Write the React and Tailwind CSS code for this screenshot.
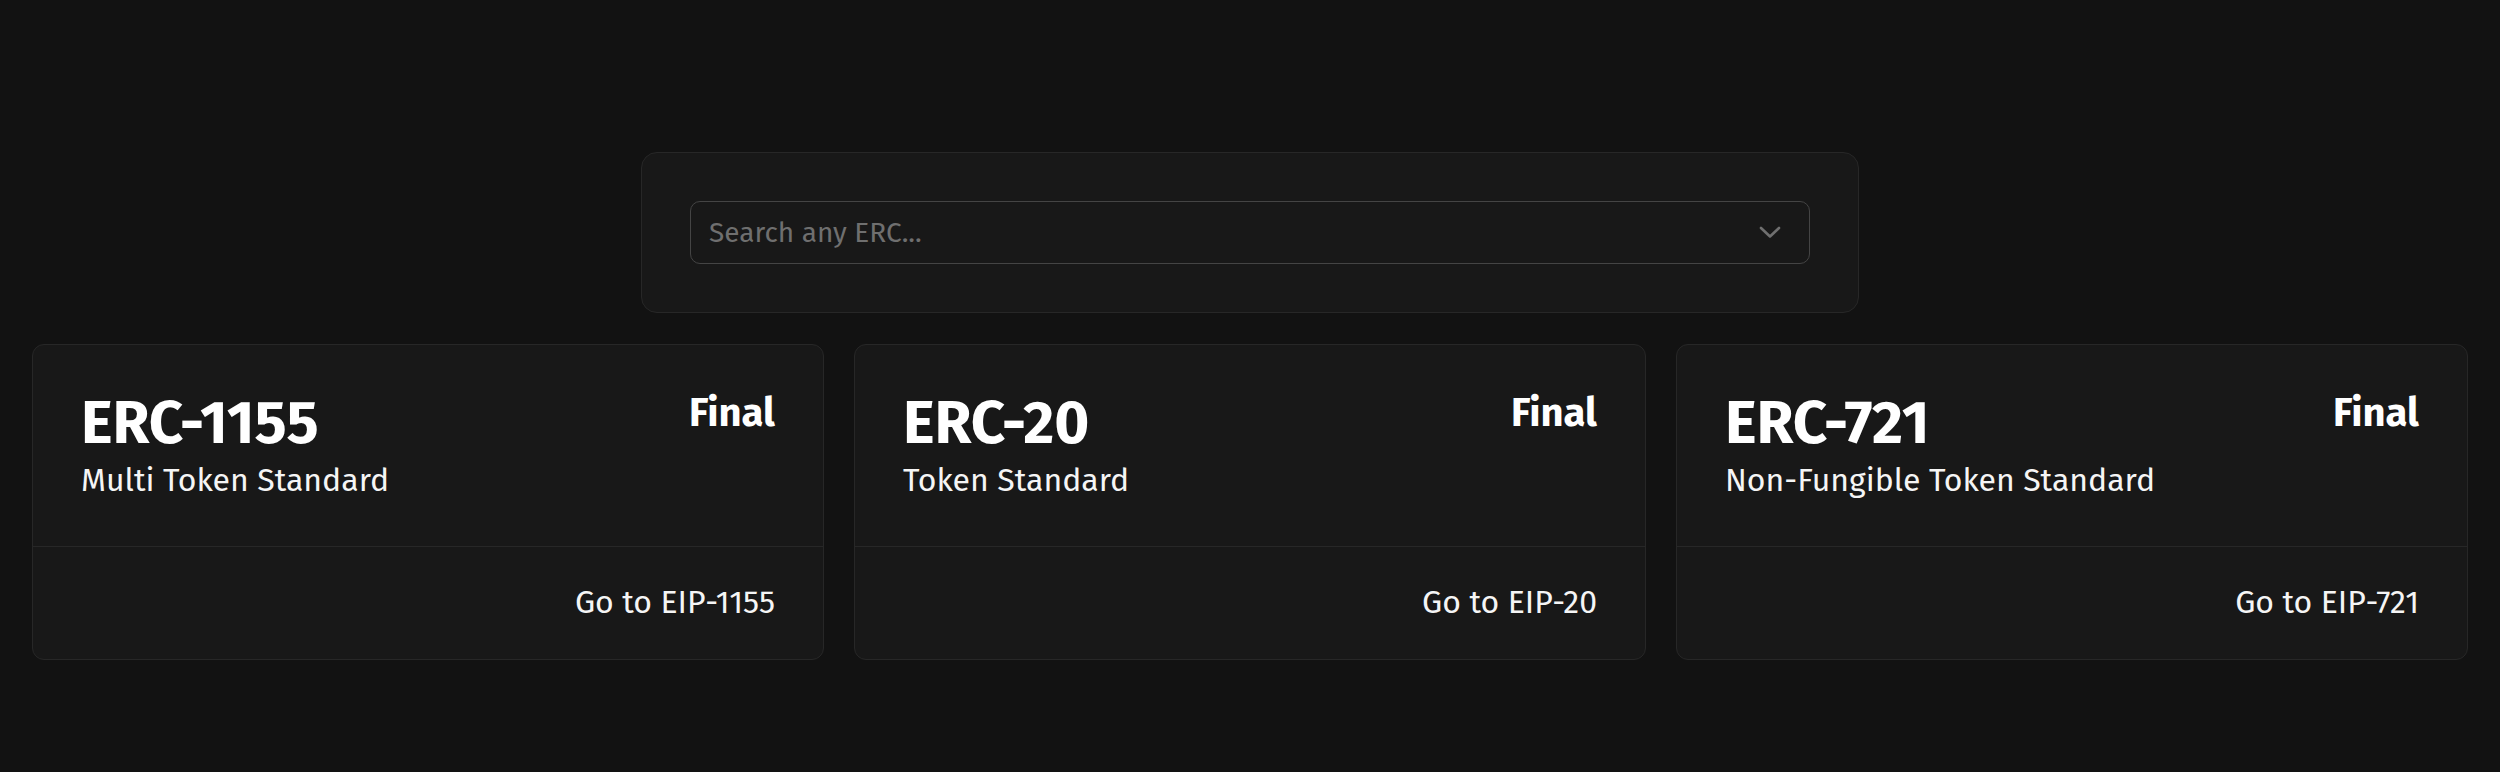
import React from "react";

const cards = [
  { id: "ERC-1155", name: "Multi Token Standard", status: "Final", link: "Go to EIP-1155" },
  { id: "ERC-20", name: "Token Standard", status: "Final", link: "Go to EIP-20" },
  { id: "ERC-721", name: "Non-Fungible Token Standard", status: "Final", link: "Go to EIP-721" },
];

function Card({ c }) {
  return (
    <div className="rounded-xl border border-[#272727] bg-[#181818] text-white">
      <div className="flex items-start justify-between border-b border-[#272727] p-12">
        <div>
          <h2 className="text-6xl leading-none font-bold">{c.id}</h2>
          <p className="mt-[9px] text-[32px] leading-9 text-[#f5f5f5]">{c.name}</p>
        </div>
        <span className="text-[40px] leading-10 font-bold">{c.status}</span>
      </div>
      <div className="flex justify-end px-12 pt-[37px] pb-[39px]">
        <a className="text-[32px] leading-9 text-[#f5f5f5]">{c.link}</a>
      </div>
    </div>
  );
}

export default function App() {
  return (
    <div className="min-h-screen bg-[#121212] px-8 pt-[152px] font-['Fira_Sans','Roboto',sans-serif]">
      <div className="mx-auto w-[1218px] rounded-2xl border border-[#272727] bg-[#181818] p-12">
        <div className="flex h-[63px] items-center justify-between rounded-[10px] border border-[#444444] pl-[18px] pr-[28px]">
          <span className="text-[28px] text-[#6f6f6f]">Search any ERC...</span>
          <svg width="22" height="13" viewBox="0 0 22 13" fill="none">
            <path d="M2 2 L11 10.5 L20 2" stroke="#6f6f6f" strokeWidth="2.6" strokeLinecap="round" strokeLinejoin="round" />
          </svg>
        </div>
      </div>
      <div className="mt-[31px] grid grid-cols-3 gap-[30px]">
        {cards.map((c) => (
          <Card key={c.id} c={c} />
        ))}
      </div>
    </div>
  );
}
